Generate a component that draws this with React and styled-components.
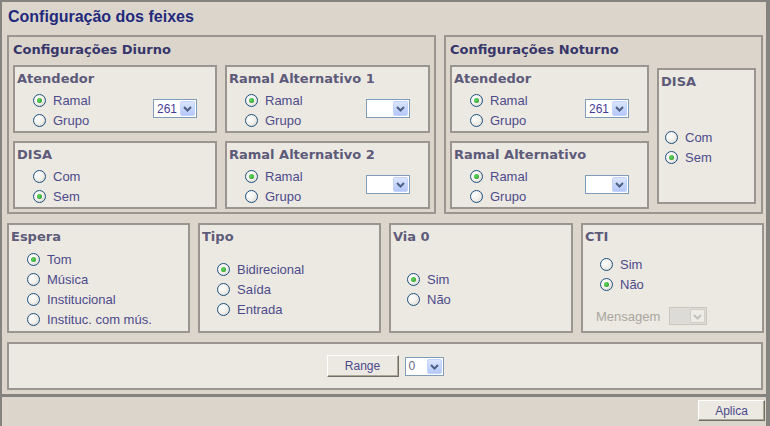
import React from "react";
import styled, { createGlobalStyle } from "styled-components";

const GlobalStyle = createGlobalStyle`
  html, body {
    margin: 0;
    padding: 0;
    background: #dcd5cb;
  }
  * {
    box-sizing: border-box;
  }
`;

const Page = styled.div`
  width: 770px;
  height: 426px;
  display: flex;
  flex-direction: column;
  background: #dcd5cb;
  border-left: 2px solid #858380;
  border-top: 2px solid #858380;
  border-right: 4px solid #858380;
  font-family: "Liberation Sans", Arial, sans-serif;
  overflow: hidden;
`;

const Main = styled.div`
  padding: 6px 0 4px 5px;
  border-bottom: 3px solid #858380;
`;

const Title = styled.h1`
  margin: 0 0 0 1px;
  font-size: 16px;
  line-height: 18px;
  font-weight: bold;
  color: #1f2a7c;
`;

const TopRow = styled.div`
  display: flex;
  gap: 8px;
  margin-top: 9px;
  height: 179px;
`;

const Group = styled.section`
  width: ${(p) => p.$width}px;
  border: 2px solid #9a9590;
  padding: 5px 4px 3px 4px;
`;

const GroupTitle = styled.h2`
  margin: 0 0 8px 0;
  font-family: "DejaVu Sans", Verdana, sans-serif;
  font-size: 13px;
  line-height: 15px;
  font-weight: bold;
  color: #36366a;
`;

const BoxGrid = styled.div`
  display: grid;
  grid-template-columns: ${(p) => p.$columns};
  grid-template-rows: 68px 68px;
  gap: 8px;
`;

const Box = styled.div`
  display: flex;
  flex-direction: column;
  background: #ece9e3;
  border: 2px solid #9a9590;
  padding-top: 4px;
`;

const TallBox = styled(Box)`
  grid-row: span 2;
  align-self: start;
  height: 136px;
  margin-top: 3px;
`;

const BoxTitle = styled.h3`
  margin: 0;
  padding-left: 2px;
  font-family: "DejaVu Sans", Verdana, sans-serif;
  font-size: 13px;
  line-height: 15px;
  font-weight: bold;
  color: #5d5b79;
`;

const RowBody = styled.div`
  display: flex;
  justify-content: space-between;
  align-items: flex-start;
  padding: 4px 18px 0 18px;
`;

const CenterBody = styled.div`
  flex: 1;
  display: flex;
  flex-direction: column;
  justify-content: center;
  padding: 4px 0 0 ${(p) => p.$indent}px;
`;

const Options = styled.div`
  display: flex;
  flex-direction: column;
`;

const OptionRow = styled.label`
  display: flex;
  align-items: center;
  gap: 7px;
  height: 20px;
  font-size: 13px;
  color: #4d4b8a;
  white-space: nowrap;
`;

const RadioMark = styled.span`
  flex: none;
  display: inline-flex;
  align-items: center;
  justify-content: center;
  width: 13px;
  height: 13px;
  border-radius: 50%;
  border: 1px solid #1c5180;
  background: radial-gradient(circle at 35% 35%, #ffffff 0%, #f3f2ee 45%, #d4d0c7 100%);

  &::after {
    content: "";
    width: 5px;
    height: 5px;
    border-radius: 50%;
    background: ${(p) =>
      p.$checked ? "radial-gradient(circle at 40% 40%, #63d863, #1c921c)" : "transparent"};
  }
`;

const SelectBox = styled.div`
  flex: none;
  display: flex;
  align-items: center;
  justify-content: space-between;
  width: ${(p) => p.$width}px;
  height: ${(p) => p.$height || 19}px;
  margin-top: ${(p) => p.$offset || 0}px;
  padding: 1px;
  border: 1px solid ${(p) => (p.$disabled ? "#c9c7ba" : "#7f9db9")};
  background: ${(p) => (p.$disabled ? "#dcdbd7" : "#ffffff")};
`;

const SelectValue = styled.span`
  padding-left: 2px;
  font-size: 12px;
  line-height: 14px;
  color: ${(p) => p.$color || "#4a3c9a"};
`;

const ArrowButton = styled.span`
  display: flex;
  align-items: center;
  justify-content: center;
  width: 15px;
  height: 100%;
  border-radius: 2px;
  border: 1px solid ${(p) => (p.$disabled ? "#d2d0c6" : "#c3d3fd")};
  background: ${(p) =>
    p.$disabled ? "#eeece6" : "linear-gradient(180deg, #dbe5fe 0%, #b4c8f7 100%)"};
`;

const BottomRow = styled.div`
  display: grid;
  grid-template-columns: 183px 183px 184px 183px;
  gap: 8px;
  height: 110px;
  margin-top: 9px;
`;

const MessageRow = styled.div`
  display: flex;
  align-items: center;
  gap: 9px;
  margin: 13px 0 0 -4px;
  font-size: 13px;
  color: #aaa69f;
`;

const RangeBar = styled.div`
  display: flex;
  align-items: center;
  justify-content: center;
  gap: 6px;
  width: 756px;
  height: 48px;
  margin-top: 9px;
  background: #ece9e3;
  border: 2px solid #9a9590;
`;

const Button = styled.button`
  width: ${(p) => p.$width}px;
  height: ${(p) => p.$height}px;
  padding: 0;
  font-family: "Liberation Sans", Arial, sans-serif;
  font-size: 12px;
  color: #4b4a8a;
  background: #ece9e3;
  border: 1px solid;
  border-color: #ffffff #716f64 #716f64 #ffffff;
  box-shadow: inset -1px -1px 0 #aca899;
`;

const Footer = styled.div`
  flex: 1;
  display: flex;
  justify-content: flex-end;
  align-items: flex-start;
  padding: 3px 1px 0 0;
`;

const Chevron = ({ disabled }) => (
  <svg width="11" height="11" viewBox="0 0 11 11">
    <polyline
      points="2,4 5.5,7.5 9,4"
      fill="none"
      stroke={disabled ? "#c4c2ba" : "#4d6185"}
      strokeWidth="2"
    />
  </svg>
);

const Select = ({ value, width, offset, height, disabled, color }) => (
  <SelectBox $width={width} $offset={offset} $height={height} $disabled={disabled}>
    <SelectValue $color={color}>{value}</SelectValue>
    <ArrowButton $disabled={disabled}>
      <Chevron disabled={disabled} />
    </ArrowButton>
  </SelectBox>
);

const RadioList = ({ options, checked }) => (
  <Options>
    {options.map((opt) => (
      <OptionRow key={opt}>
        <RadioMark $checked={opt === checked} />
        {opt}
      </OptionRow>
    ))}
  </Options>
);

const RamalBox = ({ title, selectValue }) => (
  <Box>
    <BoxTitle>{title}</BoxTitle>
    <RowBody>
      <RadioList options={["Ramal", "Grupo"]} checked="Ramal" />
      <Select value={selectValue} width={44} offset={9} />
    </RowBody>
  </Box>
);

const OptionBox = ({ title, options, checked, indent, children }) => (
  <Box>
    <BoxTitle>{title}</BoxTitle>
    <CenterBody $indent={indent}>
      <RadioList options={options} checked={checked} />
      {children}
    </CenterBody>
  </Box>
);

export default function App() {
  return (
    <>
      <GlobalStyle />
      <Page>
        <Main>
          <Title>Configuração dos feixes</Title>
          <TopRow>
            <Group $width={429}>
              <GroupTitle>Configurações Diurno</GroupTitle>
              <BoxGrid $columns="204px 205px">
                <RamalBox title="Atendedor" selectValue="261" />
                <RamalBox title="Ramal Alternativo 1" />
                <Box>
                  <BoxTitle>DISA</BoxTitle>
                  <RowBody>
                    <RadioList options={["Com", "Sem"]} checked="Sem" />
                  </RowBody>
                </Box>
                <RamalBox title="Ramal Alternativo 2" />
              </BoxGrid>
            </Group>
            <Group $width={319}>
              <GroupTitle>Configurações Noturno</GroupTitle>
              <BoxGrid $columns="199px 99px">
                <RamalBox title="Atendedor" selectValue="261" />
                <TallBox>
                  <BoxTitle>DISA</BoxTitle>
                  <CenterBody $indent={6}>
                    <RadioList options={["Com", "Sem"]} checked="Sem" />
                  </CenterBody>
                </TallBox>
                <RamalBox title="Ramal Alternativo" />
              </BoxGrid>
            </Group>
          </TopRow>

          <BottomRow>
            <OptionBox
              title="Espera"
              options={["Tom", "Música", "Institucional", "Instituc. com mús."]}
              checked="Tom"
              indent={18}
            />
            <OptionBox
              title="Tipo"
              options={["Bidirecional", "Saída", "Entrada"]}
              checked="Bidirecional"
              indent={17}
            />
            <OptionBox title="Via 0" options={["Sim", "Não"]} checked="Sim" indent={16} />
            <OptionBox title="CTI" options={["Sim", "Não"]} checked="Não" indent={17}>
              <MessageRow>
                Mensagem
                <Select width={38} height={18} disabled />
              </MessageRow>
            </OptionBox>
          </BottomRow>

          <RangeBar>
            <Button $width={72} $height={22}>
              Range
            </Button>
            <Select value="0" width={39} color="#6b6a86" />
          </RangeBar>
        </Main>
        <Footer>
          <Button $width={67} $height={21}>
            Aplica
          </Button>
        </Footer>
      </Page>
    </>
  );
}
